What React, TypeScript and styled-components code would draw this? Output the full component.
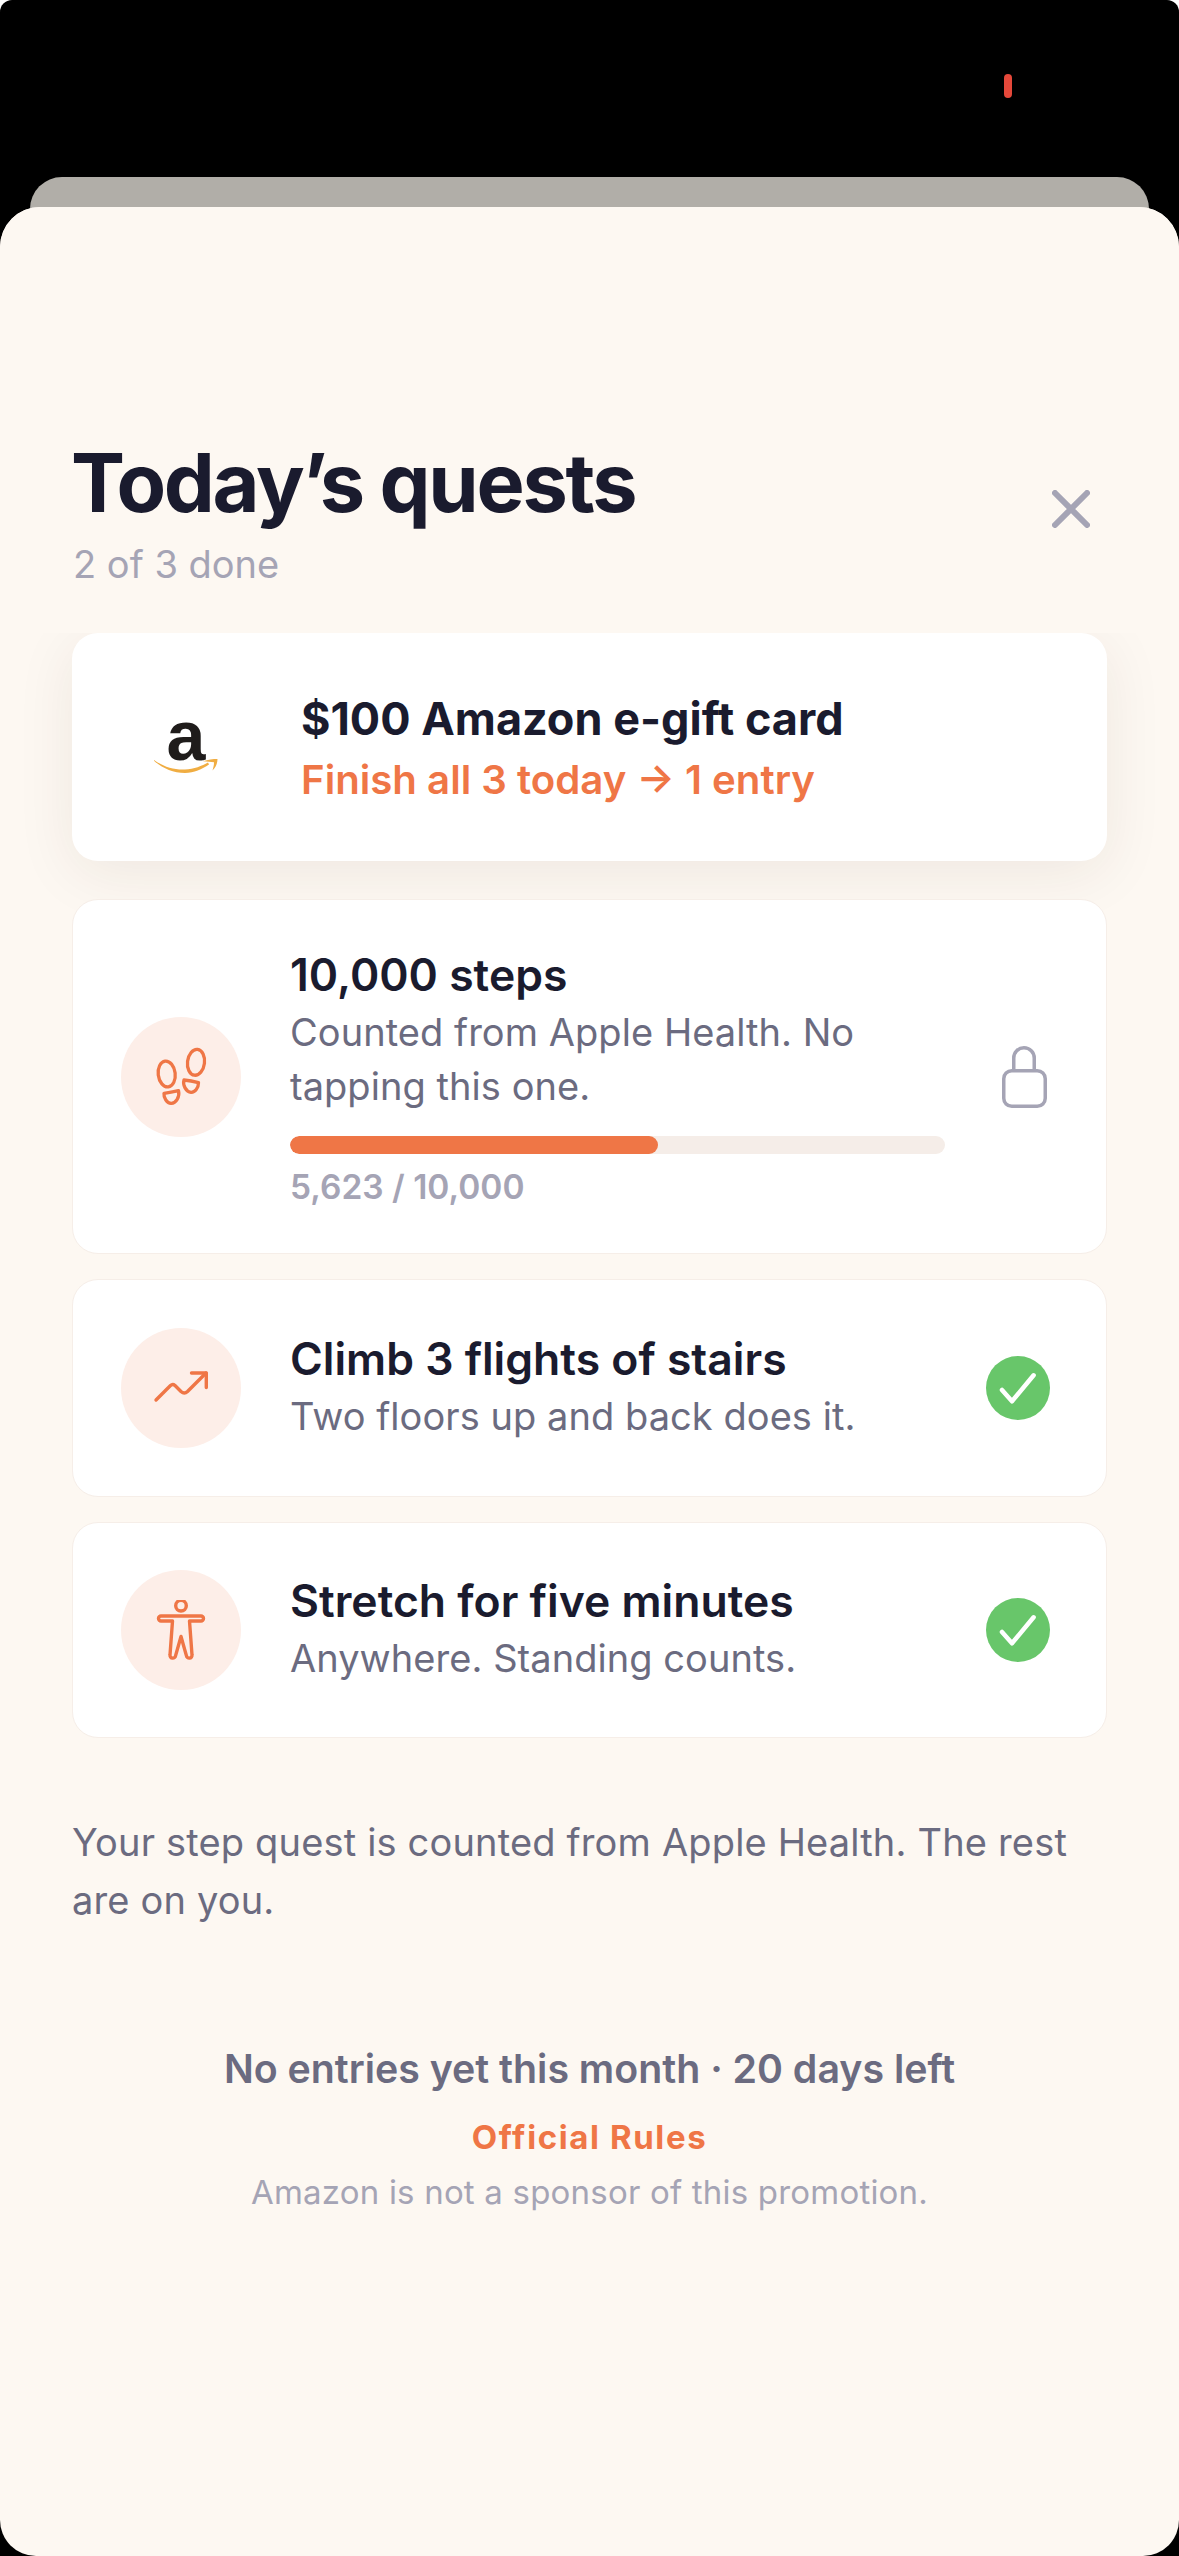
import styled, { createGlobalStyle } from "styled-components";

const GlobalStyle = createGlobalStyle`
  html, body {
    margin: 0;
    padding: 0;
    background: #fff;
  }
  * {
    box-sizing: border-box;
  }
`;

const Screen = styled.div`
  position: relative;
  width: 1179px;
  height: 2556px;
  padding-top: 177px;
  border-radius: 12px 12px 0 0;
  background: #000;
  overflow: hidden;
  font-family: Inter, "Noto Sans", sans-serif;
`;

const RecordingDot = styled.div`
  position: absolute;
  top: 74px;
  left: 1004px;
  width: 8px;
  height: 24px;
  border-radius: 4px;
  background: #e5483a;
`;

const BackSheet = styled.div`
  height: 60px;
  margin: 0 30px -30px;
  border-radius: 32px 32px 0 0;
  background: #b1aea8;
`;

const Sheet = styled.div`
  position: relative;
  height: 2349px;
  border-radius: 40px 40px 36px 36px;
  background: #fdf8f2;
  overflow: hidden;
`;

const Header = styled.header`
  position: relative;
  z-index: 1;
  display: flex;
  justify-content: space-between;
  align-items: flex-end;
  height: 426px;
  padding: 0 89px 46px 73px;
  background: #fdf8f2;
`;

const Title = styled.h1`
  margin: 0 0 0 -2px;
  font-size: 81px;
  line-height: 94px;
  font-weight: 700;
  letter-spacing: -2.3px;
  color: #1a1b2e;
`;

const Subtitle = styled.div`
  margin-top: 11px;
  font-size: 38px;
  line-height: 46px;
  color: #a5a4b5;
`;

const CloseButton = styled.button`
  display: flex;
  padding: 0;
  margin: 0 0 59px;
  border: 0;
  background: none;
`;

const Content = styled.div`
  padding: 0 72px;
`;

const PrizeCard = styled.div`
  display: flex;
  align-items: center;
  height: 228px;
  margin-bottom: 38px;
  padding-left: 76px;
  border-radius: 26px;
  background: #fff;
  box-shadow: 0 12px 60px rgba(60, 40, 20, 0.08);
`;

const AmazonLogo = styled.div`
  position: relative;
  display: flex;
  justify-content: center;
  width: 76px;
  height: 76px;
  margin-right: 77px;
`;

const AmazonLetter = styled.span`
  margin-top: -1px;
  font-family: "Liberation Sans", sans-serif;
  font-size: 70px;
  line-height: 56px;
  font-weight: 700;
  color: #1f1c1b;
`;

const AmazonSmile = styled.svg`
  position: absolute;
  left: 6px;
  top: 50px;
`;

const PrizeText = styled.div`
  margin-top: 3px;
`;

const PrizeTitle = styled.div`
  font-size: 45px;
  line-height: 56px;
  font-weight: 700;
  color: #1a1b2e;
`;

const PrizeNote = styled.div`
  margin-top: 7px;
  font-size: 40.2px;
  line-height: 52px;
  font-weight: 600;
  color: #ef7646;
`;

const QuestList = styled.div`
  display: flex;
  flex-direction: column;
  gap: 25px;
`;

const QuestCard = styled.div<{ $height: number }>`
  display: flex;
  align-items: center;
  height: ${(p) => p.$height}px;
  padding: 0 56px 0 48px;
  border: 1px solid #f6eee8;
  border-radius: 26px;
  background: #fff;
`;

const IconCircle = styled.div`
  flex: none;
  display: flex;
  align-items: center;
  justify-content: center;
  width: 120px;
  height: 120px;
  margin-right: 49px;
  border-radius: 50%;
  background: #fdeee8;
`;

const QuestBody = styled.div<{ $nudge?: number }>`
  flex: 1;
  min-width: 0;
  margin-top: ${(p) => p.$nudge ?? -2}px;
`;

const QuestTitle = styled.div`
  margin-bottom: 3px;
  font-size: 44.5px;
  line-height: 54px;
  font-weight: 600;
  color: #1a1b2e;
`;

const QuestText = styled.div`
  font-size: 38px;
  line-height: 54px;
  letter-spacing: 0.05px;
  color: #6b6b80;
`;

const ProgressTrack = styled.div`
  width: 655px;
  height: 18px;
  margin-top: 23px;
  border-radius: 9px;
  background: #f5ede8;
  overflow: hidden;
`;

const ProgressFill = styled.div`
  height: 100%;
  border-radius: 9px;
  background: #ef7646;
`;

const ProgressLabel = styled.div`
  margin-top: 11px;
  font-size: 33.5px;
  line-height: 44px;
  font-weight: 600;
  color: #a5a4b5;
`;

const Explainer = styled.p`
  margin: 75px 0 0;
  font-size: 38px;
  line-height: 58px;
  letter-spacing: 0.17px;
  color: #6b6b80;
`;

const Footer = styled.div`
  display: flex;
  flex-direction: column;
  align-items: center;
  margin-top: 115px;
`;

const EntryCount = styled.div`
  font-size: 39.3px;
  line-height: 50px;
  font-weight: 600;
  color: #6b6b80;
`;

const RulesLink = styled.a`
  margin-top: 20px;
  font-size: 33px;
  line-height: 46px;
  font-weight: 700;
  letter-spacing: 1.6px;
  color: #ef7646;
`;

const Disclaimer = styled.div`
  margin-top: 12px;
  font-size: 33px;
  line-height: 40px;
  letter-spacing: 0.2px;
  color: #a5a4b5;
`;

const orange = "#ef7646";

function FootprintsIcon() {
  return (
    <svg width="60" height="60" viewBox="0 0 60 60" fill="none" stroke={orange} strokeWidth="3.3" strokeLinejoin="round">
      <ellipse cx="15.7" cy="27" rx="8.5" ry="13" transform="rotate(-7 15.7 27)" />
      <ellipse cx="45" cy="15.3" rx="8.5" ry="13" transform="rotate(7 45 15.3)" />
      <path d="M13 46.3Q20 45.5 27.5 43.7C29 50 25 56.5 20 56.3 16 56.2 12.5 51 13 46.3Z" />
      <path d="M33 33Q40 33.5 47.5 35.7C47.5 41 44 45.5 40 45.3 35 45 31.5 38 33 33Z" />
    </svg>
  );
}

function TrendIcon() {
  return (
    <svg width="60" height="60" viewBox="0 0 60 60" fill="none" stroke={orange} strokeWidth="3.4" strokeLinecap="round" strokeLinejoin="round">
      <path d="M5 42 19.5 27.5Q21.7 25.5 24 27.5L30 33.5Q33.3 36.5 36.500 33.5L55 15" />
      <path d="M40.5 15H55.3V29.5" />
    </svg>
  );
}

function StretchIcon() {
  return (
    <svg width="60" height="60" viewBox="0 0 60 60" fill="none" stroke={orange} strokeWidth="3.4" strokeLinejoin="round">
      <circle cx="30" cy="5.7" r="5.3" />
      <path d="M10 16h40a2.500 2.500 0 0 1 0 5H38.500L41 55a2.800 2.800 0 0 1-5.600.6L30 36.500 24.600 55.600a2.800 2.800 0 0 1-5.600-.6L21.500 21H10a2.500 2.500 0 0 1 0-5Z" />
    </svg>
  );
}

function LockIcon() {
  return (
    <svg width="48" height="62" viewBox="0 0 48 62" fill="none" stroke="#a5a4b5" strokeWidth="3.5">
      <rect x="1.75" y="24.75" width="41.5" height="35.5" rx="8" />
      <path d="M11.75 24.75V12a10.25 10.25 0 0 1 20.5 0v12.75" />
    </svg>
  );
}

function CheckBadge() {
  return (
    <svg width="64" height="64" viewBox="0 0 64 64">
      <circle cx="32" cy="32" r="32" fill="#68c66a" />
      <path d="M16 34l10 11.3L47.6 19.3" fill="none" stroke="#fff" strokeWidth="4.5" strokeLinecap="round" strokeLinejoin="round" />
    </svg>
  );
}

export default function App() {
  return (
    <Screen>
      <GlobalStyle />
      <RecordingDot />
      <BackSheet />
      <Sheet>
        <Header>
          <div>
            <Title>Today’s quests</Title>
            <Subtitle>2 of 3 done</Subtitle>
          </div>
          <CloseButton aria-label="Close">
            <svg width="38" height="38" viewBox="0 0 38 38" stroke="#a5a4b5" strokeWidth="6" strokeLinecap="round">
              <path d="M3 3l32 32M35 3 3 35" />
            </svg>
          </CloseButton>
        </Header>
        <Content>
          <PrizeCard>
            <AmazonLogo>
              <AmazonLetter>a</AmazonLetter>
              <AmazonSmile width="64" height="15" viewBox="0 0 64 15" fill="#f0ad42">
                <path d="M0 1C10 8 20 11 31 10.5 40 10 48 7 54 3.5L55 5.5C48 10 40 14 31 14 19 14 8 9 0 1.8Z" />
                <path d="M49 2.3C54 .5 59 0 63.5 0 63.5 4 62 8 58.5 11.5 59.5 8 60 6 60 3.3 57 3 53 2.8 49 2.3Z" />
              </AmazonSmile>
            </AmazonLogo>
            <PrizeText>
              <PrizeTitle>$100 Amazon e-gift card</PrizeTitle>
              <PrizeNote>Finish all 3 today → 1 entry</PrizeNote>
            </PrizeText>
          </PrizeCard>
          <QuestList>
            <QuestCard $height={355}>
              <IconCircle>
                <FootprintsIcon />
              </IconCircle>
              <QuestBody $nudge={3}>
                <QuestTitle>10,000 steps</QuestTitle>
                <QuestText>
                  Counted from Apple Health. No
                  <br />
                  tapping this one.
                </QuestText>
                <ProgressTrack>
                  <ProgressFill style={{ width: `${(5623 / 10000) * 100}%` }} />
                </ProgressTrack>
                <ProgressLabel>5,623 / 10,000</ProgressLabel>
              </QuestBody>
              <LockIcon />
            </QuestCard>
            <QuestCard $height={218}>
              <IconCircle>
                <TrendIcon />
              </IconCircle>
              <QuestBody>
                <QuestTitle>Climb 3 flights of stairs</QuestTitle>
                <QuestText>Two floors up and back does it.</QuestText>
              </QuestBody>
              <CheckBadge />
            </QuestCard>
            <QuestCard $height={216}>
              <IconCircle>
                <StretchIcon />
              </IconCircle>
              <QuestBody>
                <QuestTitle>Stretch for five minutes</QuestTitle>
                <QuestText>Anywhere. Standing counts.</QuestText>
              </QuestBody>
              <CheckBadge />
            </QuestCard>
          </QuestList>
          <Explainer>Your step quest is counted from Apple Health. The rest are on you.</Explainer>
          <Footer>
            <EntryCount>No entries yet this month · 20 days left</EntryCount>
            <RulesLink>Official Rules</RulesLink>
            <Disclaimer>Amazon is not a sponsor of this promotion.</Disclaimer>
          </Footer>
        </Content>
      </Sheet>
    </Screen>
  );
}
